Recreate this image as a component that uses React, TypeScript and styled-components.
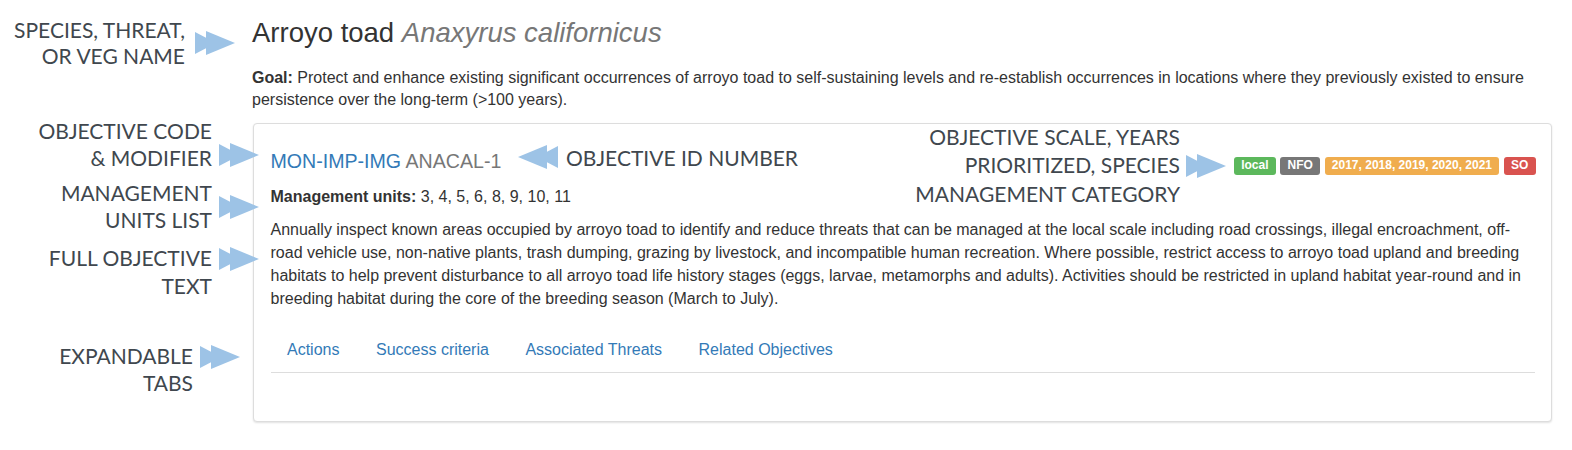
import React from "react";
import styled, { createGlobalStyle } from "styled-components";

const Global = createGlobalStyle`
  html, body { margin: 0; padding: 0; background: #fff; }
  body {
    font-family: "Liberation Sans", Arial, Helvetica, sans-serif;
    font-size: 16px;
    line-height: 23px;
    color: #333;
  }
  * { box-sizing: border-box; }
`;

const Page = styled.div`
  position: relative;
  width: 1572px;
  height: 450px;
  padding: 18px 20px 0 252px;
  overflow: hidden;
`;

const Title = styled.h3`
  margin: 0;
  font-size: 27.5px;
  font-weight: 400;
  line-height: 30px;
  color: #333;
`;

const Sci = styled.em`
  color: #777;
`;

const Goal = styled.p`
  margin: 19px 0 12px;
  width: 1290px;
  line-height: 22px;
`;

const Panel = styled.div`
  margin-left: 1px;
  width: 1299px;
  border: 1px solid #ddd;
  border-radius: 4px;
  box-shadow: 0 1px 2px rgba(0, 0, 0, 0.12);
  padding: 16.5px 16.5px 48px;
  background: #fff;
`;

const HeaderRow = styled.div`
  display: flex;
  align-items: baseline;
  justify-content: space-between;
  margin: 10.5px 0 11px;
`;

const Code = styled.h4`
  margin: 0;
  font-size: 19.6px;
  font-weight: 400;
  line-height: 21.8px;
  color: #777;
`;

const CodeLink = styled.span`
  color: #337ab7;
`;

const Badges = styled.div`
  display: flex;
  align-items: baseline;
  gap: 4.6px;
  transform: translate(1px, 1px);
`;

const Badge = styled.span<{ $bg: string }>`
  display: inline-block;
  padding: 0.2em 0.6em 0.3em;
  font-size: 12px;
  font-weight: 700;
  line-height: 1;
  color: #fff;
  background: ${(p) => p.$bg};
  border-radius: 0.25em;
  white-space: nowrap;
`;

const Units = styled.p`
  margin: 0 0 10px;
`;

const Body = styled.p`
  margin: 0 0 17px;
`;

const Tabs = styled.ul`
  display: flex;
  list-style: none;
  margin: 17px 0 0;
  padding: 0;
  border-bottom: 1px solid #ddd;
`;

const Tab = styled.li`
  margin-right: 3.5px;
  padding: 11px 16.5px;
  color: #337ab7;
  line-height: 23px;
  cursor: pointer;
`;

const Callout = styled.div<{ $top: number; $right?: number; $left?: number; $gap: number; $lh: number }>`
  position: absolute;
  top: ${(p) => p.$top}px;
  ${(p) => (p.$right !== undefined ? `right: ${p.$right}px;` : "")}
  ${(p) => (p.$left !== undefined ? `left: ${p.$left}px;` : "")}
  display: flex;
  align-items: flex-start;
  gap: ${(p) => p.$gap}px;
  font-family: Lato, "Open Sans", sans-serif;
  font-size: 21px;
  line-height: ${(p) => p.$lh}px;
  color: #40474e;
  white-space: nowrap;
`;

const CalloutText = styled.div<{ $align: "left" | "right" }>`
  text-align: ${(p) => p.$align};
`;

const ArrowSvg = styled.svg<{ $dy: number; $flip?: boolean }>`
  flex: none;
  margin-top: ${(p) => p.$dy}px;
  ${(p) => (p.$flip ? "transform: scaleX(-1);" : "")}
`;

const Arrow = ({ dy, flip }: { dy: number; flip?: boolean }) => (
  <ArrowSvg $dy={dy} $flip={flip} width="40" height="24" viewBox="0 0 40 24">
    <polygon points="0,1 21,12 0,23" fill="#9dc3e6" />
    <polygon points="11,0 40,12 11,24" fill="#9dc3e6" />
  </ArrowSvg>
);

type Note = {
  lines: string[];
  top: number;
  dy: number;
  gap: number;
  lh: number;
  right?: number;
  left?: number;
};

const notes: Note[] = [
  { lines: ["SPECIES, THREAT,", "OR VEG NAME"], top: 17, dy: 14, gap: 10, lh: 26, right: 1572 - 235 },
  { lines: ["OBJECTIVE CODE", "& MODIFIER"], top: 116.5, dy: 26.5, gap: 7, lh: 27, right: 1572 - 259 },
  { lines: ["MANAGEMENT", "UNITS LIST"], top: 178.5, dy: 16.5, gap: 7, lh: 27, right: 1572 - 259 },
  { lines: ["FULL OBJECTIVE", "TEXT"], top: 244, dy: 3, gap: 7, lh: 28, right: 1572 - 259 },
  { lines: ["EXPANDABLE", "TABS"], top: 341.5, dy: 3.5, gap: 7, lh: 27, right: 1572 - 240 },
  {
    lines: ["OBJECTIVE SCALE, YEARS", "PRIORITIZED, SPECIES", "MANAGEMENT CATEGORY"],
    top: 122.75,
    dy: 31,
    gap: 6,
    lh: 28.5,
    right: 1572 - 1226,
  },
];

const tabs = ["Actions", "Success criteria", "Associated Threats", "Related Objectives"];

export default function App() {
  return (
    <>
      <Global />
      <Page>
        <Title>
          Arroyo toad <Sci>Anaxyrus californicus</Sci>
        </Title>
        <Goal>
          <strong>Goal:</strong> Protect and enhance existing significant occurrences of arroyo toad to
          self-sustaining levels and re-establish occurrences in locations where they previously existed to
          ensure persistence over the long-term (&gt;100 years).
        </Goal>
        <Panel>
          <HeaderRow>
            <Code>
              <CodeLink>MON-IMP-IMG</CodeLink> ANACAL-1
            </Code>
            <Badges>
              <Badge $bg="#5cb85c">local</Badge>
              <Badge $bg="#777777">NFO</Badge>
              <Badge $bg="#f0ad4e">2017, 2018, 2019, 2020, 2021</Badge>
              <Badge $bg="#d9534f">SO</Badge>
            </Badges>
          </HeaderRow>
          <Units>
            <strong>Management units:</strong> 3, 4, 5, 6, 8, 9, 10, 11
          </Units>
          <Body>
            Annually inspect known areas occupied by arroyo toad to identify and reduce threats that can be
            managed at the local scale including road crossings, illegal encroachment, off-road vehicle use,
            non-native plants, trash dumping, grazing by livestock, and incompatible human recreation. Where
            possible, restrict access to arroyo toad upland and breeding habitats to help prevent disturbance to
            all arroyo toad life history stages (eggs, larvae, metamorphs and adults). Activities should be
            restricted in upland habitat year-round and in breeding habitat during the core of the breeding
            season (March to July).
          </Body>
          <Tabs>
            {tabs.map((t) => (
              <Tab key={t}>{t}</Tab>
            ))}
          </Tabs>
        </Panel>

        {notes.map((n) => (
          <Callout key={n.lines[0]} $top={n.top} $right={n.right} $left={n.left} $gap={n.gap} $lh={n.lh}>
            <CalloutText $align="right">
              {n.lines.map((l) => (
                <div key={l}>{l}</div>
              ))}
            </CalloutText>
            <Arrow dy={n.dy} />
          </Callout>
        ))}
        <Callout $top={143.5} $left={518} $gap={8} $lh={27}>
          <Arrow dy={1.5} flip />
          <CalloutText $align="left">OBJECTIVE ID NUMBER</CalloutText>
        </Callout>
      </Page>
    </>
  );
}
